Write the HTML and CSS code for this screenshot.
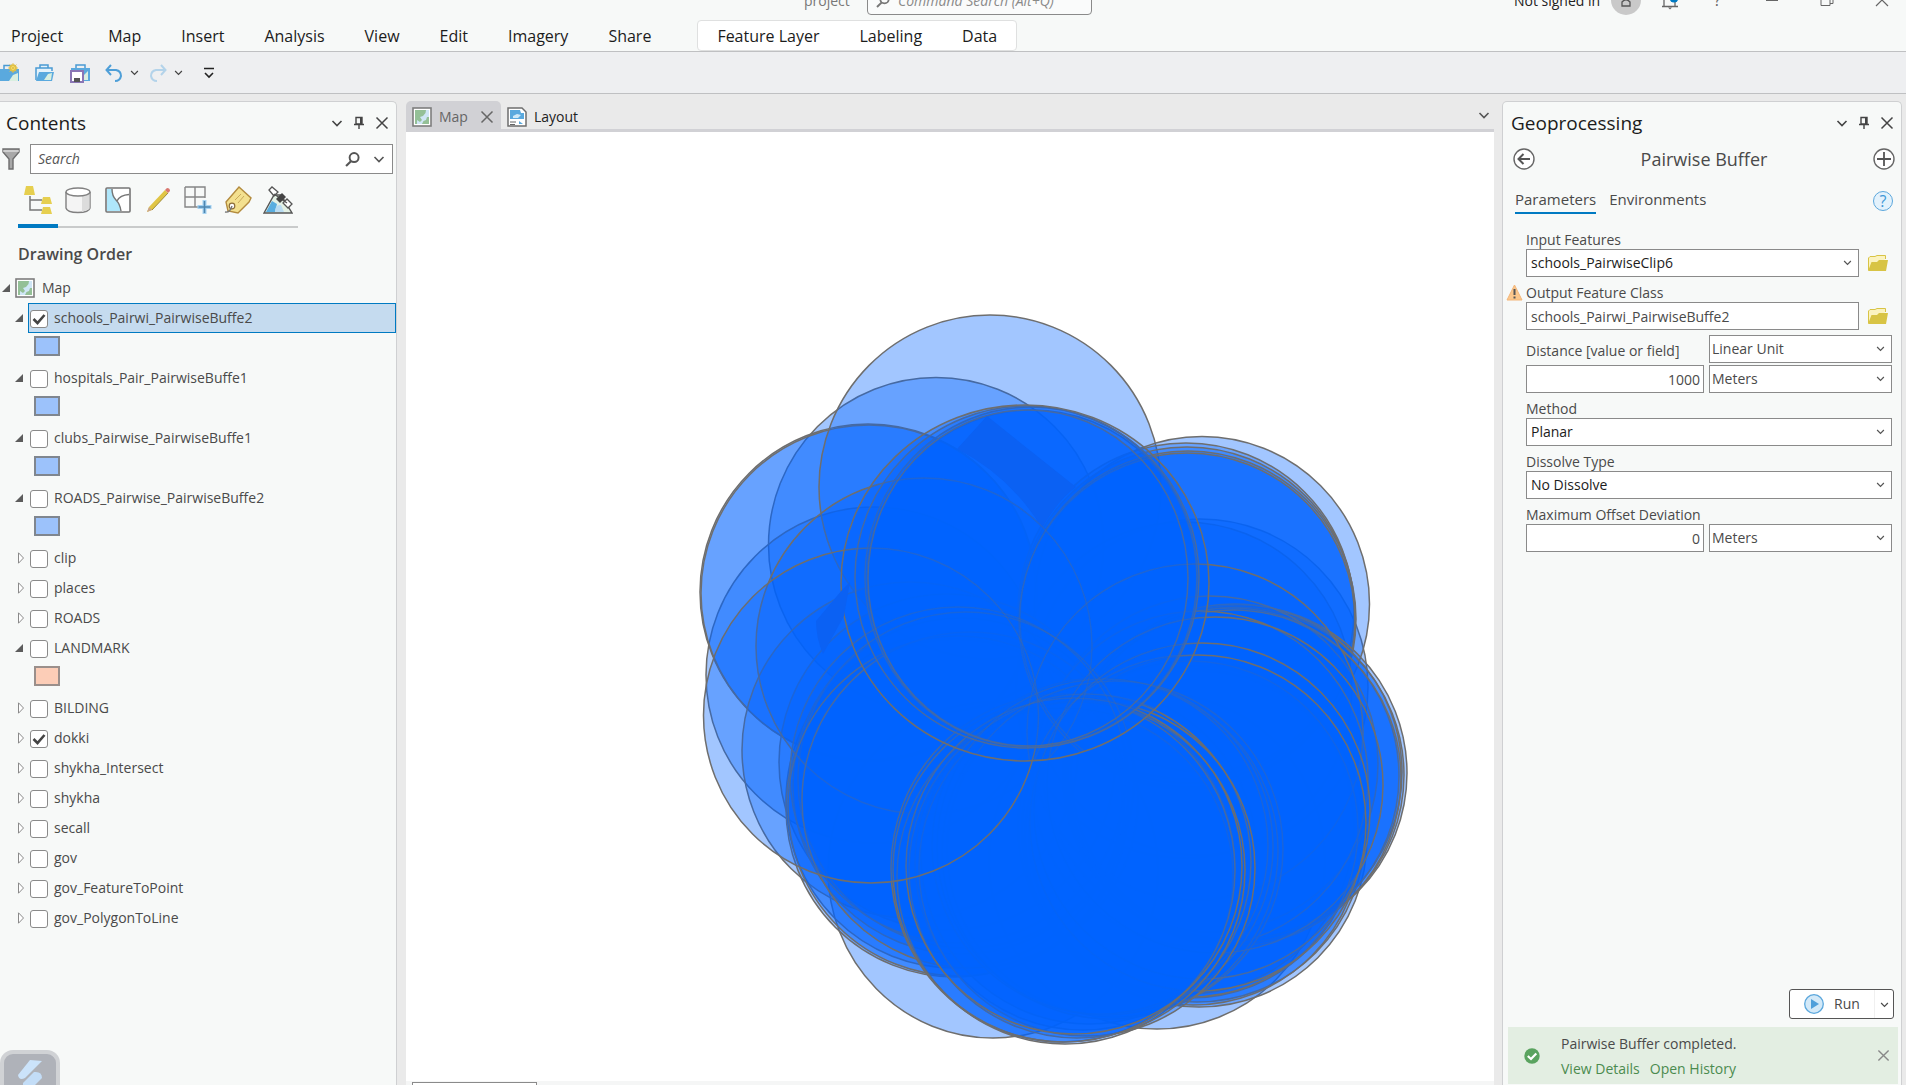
FILE: index.html
```html
<!DOCTYPE html>
<html lang="en">
<head>
<meta charset="utf-8">
<title>project</title>
<link rel="stylesheet" href="styles.css">
</head>
<body>
<svg class="defs" aria-hidden="true">
  <symbol id="chev" viewBox="0 0 12 12"><path d="M1.500 4L6 8.500L10.500 4" fill="none" stroke="currentColor" stroke-width="1.600"/></symbol>
  <symbol id="pin" viewBox="0 0 12 14"><path d="M3 1.500H9V8H3ZM1 8.500H11M6 8.500V13" fill="none" stroke="currentColor" stroke-width="1.400"/><path d="M7 1.500H9V8H7Z" fill="currentColor"/></symbol>
  <symbol id="x" viewBox="0 0 14 14"><path d="M1.500 1.500L12.500 12.500M12.500 1.500L1.500 12.500" fill="none" stroke="currentColor" stroke-width="1.500"/></symbol>
  <symbol id="mag" viewBox="0 0 14 14"><circle cx="8.500" cy="5.200" r="4.200" fill="none" stroke="currentColor" stroke-width="1.800"/><path d="M5.800 8.400L1 13" stroke="currentColor" stroke-width="2"/></symbol>
  <symbol id="mapicon" viewBox="0 0 20 20"><rect x="1" y="1" width="18" height="18" fill="#fff" stroke="#7d7d7d" stroke-width="1.600"/><path d="M3 3H17V17H3Z" fill="#cfe6f6"/><path d="M3 3H14L13.500 6L11 9L8 10L10 13L8 15L5 13L5 17H3ZM17 10V17H10L11.500 14L14 13L15 10Z" fill="#94c097"/></symbol>
  <symbol id="folder" viewBox="0 0 20 16"><path d="M.5 15V3L2 1.500H7L9 .5H17.500V4" fill="#fbf3c0" stroke="#d8c445"/><path d="M0 16L3.500 7H9L11 5H20L18 16Z" fill="#d8c445"/></symbol>
  <symbol id="open" viewBox="0 0 12 12"><path d="M10 2V10H2Z" fill="#5c5c5c"/></symbol>
  <symbol id="closed" viewBox="0 0 12 12"><path d="M5.500 .8V11.200L10.500 6Z" fill="#fff" stroke="#8a8a8a"/></symbol>
</svg>

<header class="top">
  <div class="titlebar">
    <span class="title-text">project</span>
    <label class="cmd"><svg width="14" height="14"><use href="#mag"/></svg><input type="text" placeholder="Command Search (Alt+Q)" aria-label="Command Search"></label>
    <div class="account">
      <span>Not signed in</span>
      <svg class="avatar" width="30" height="30" viewBox="0 0 30 30"><circle cx="15" cy="15" r="15" fill="#c9c9c9"/><path d="M11 21V17Q15 12.500 19 17V21Z" fill="none" stroke="#555" stroke-width="1.300"/></svg>
      <button class="win bell" aria-label="Notifications"><svg width="20" height="30" viewBox="0 0 20 30"><path d="M2 21.500H18M4 21V10Q10 5 15 10V21" fill="none" stroke="#666" stroke-width="1.300"/><path d="M8 22.500H12L10 24.500Z" fill="#666"/><circle cx="14" cy="13" r="4.500" fill="#007ac2"/></svg></button>
      <button class="win help-top" aria-label="Help">?</button>
      <button class="win" aria-label="Minimize"><svg width="14" height="30" viewBox="0 0 14 30"><path d="M1 15.500H13" stroke="#666"/></svg></button>
      <button class="win" aria-label="Restore"><svg width="14" height="30" viewBox="0 0 14 30"><path d="M1 10H10V20.500H1ZM10 18.500H13V8H4V10" fill="none" stroke="#666"/></svg></button>
      <button class="win" aria-label="Close"><svg width="14" height="30" viewBox="0 0 14 30"><path d="M1 9L13 21M13 9L1 21" stroke="#666" stroke-width="1.200"/></svg></button>
    </div>
  </div>
  <nav class="menu">
    <button class="file">Project</button><button>Map</button><button>Insert</button><button>Analysis</button><button>View</button><button>Edit</button><button>Imagery</button><button>Share</button>
    <div class="context"><button>Feature Layer</button><button>Labeling</button><button>Data</button></div>
  </nav>
</header>

<div class="quick">
  <button aria-label="New project"><svg width="20" height="20" viewBox="0 0 20 20"><path d="M4 6V2.500H11V6" fill="none" stroke="#4a9bd3" stroke-width="1.500"/><rect y="6" width="19" height="12" fill="#5aa9de"/><path d="M9 18L13 12L18 10V18Z" fill="#d9efe0"/><circle cx="13" cy="5" r="3" fill="#ffe97a" stroke="#dfbf45" stroke-width="1.500"/><path d="M13 0V10M8 5H18M9.500 1.500L16.500 8.500M16.500 1.500L9.500 8.500" stroke="#dfbf45" stroke-width=".8"/></svg></button>
  <button aria-label="Open project"><svg width="20" height="20" viewBox="0 0 20 20"><path d="M5 5V2H13V5M1 17V5H17V8" fill="#e4f2fb" stroke="#4a9bd3" stroke-width="1.500"/><path d="M1 18L4 9H19L17 18Z" fill="#5aa9de"/><path d="M9 17L13 11L17 10L16 17Z" fill="#d9efe0"/></svg></button>
  <button aria-label="Save project"><svg width="20" height="20" viewBox="0 0 20 20"><path d="M6 5V2H15V5" fill="none" stroke="#4a9bd3" stroke-width="1.500"/><path d="M1 5H20V18H1Z" fill="#5aa9de"/><path d="M14 17V12L18 8V17Z" fill="#d9efe0"/><path d="M1 8H13V19H1Z" fill="#fff" stroke="#8a76b5" stroke-width="2"/><path d="M4 15H10V19H4Z" fill="#555"/></svg></button>
  <button aria-label="Undo"><svg width="18" height="18" viewBox="0 0 18 18"><path d="M6 1L1.500 6L6 11M2 6H11Q16 7 16 12Q15 17 10 17" fill="none" stroke="#4f9fd8" stroke-width="2"/></svg></button>
  <button class="caret" aria-label="Undo list"><svg width="9" height="9"><use href="#chev"/></svg></button>
  <button aria-label="Redo"><svg width="18" height="18" viewBox="0 0 18 18"><path d="M12 1L16.500 6L12 11M16 6H7Q2 7 2 12Q3 17 8 17" fill="none" stroke="#b3d3ea" stroke-width="2"/></svg></button>
  <button class="caret" aria-label="Redo list"><svg width="9" height="9"><use href="#chev"/></svg></button>
  <button class="more" aria-label="Customize"><svg width="12" height="12" viewBox="0 0 12 12"><path d="M1 1.500H11M2 6L6 10L10 6" fill="none" stroke="#222" stroke-width="1.600"/></svg></button>
</div>

<main class="work">
  <section class="panel contents">
    <div class="phead"><h2>Contents</h2><div class="pbtn"><button aria-label="Options"><svg width="12" height="12"><use href="#chev"/></svg></button><button aria-label="Pin"><svg width="12" height="14"><use href="#pin"/></svg></button><button aria-label="Close"><svg width="14" height="14"><use href="#x"/></svg></button></div></div>
    <div class="search">
      <svg width="18" height="22" viewBox="0 0 18 22"><path d="M1 1H17V4L11 11V21H7V11L1 4Z" fill="#a8a8a8" stroke="#6d6d6d" stroke-width="1.400"/><path d="M1 3H17" stroke="#f5f5f5"/></svg>
      <div class="sbox"><input type="text" placeholder="Search" aria-label="Search"><svg width="15" height="15"><use href="#mag"/></svg><svg width="12" height="12"><use href="#chev"/></svg></div>
    </div>
    <div class="views">
      <button class="on" aria-label="List by drawing order"><svg width="28" height="28" viewBox="0 0 28 28"><path d="M6 10V24H18M6 14H18" fill="none" stroke="#777" stroke-width="1.500"/><path d="M2 0H9L11 9H0ZM19 11H26L28 18H17ZM19 21H26L28 28H17Z" fill="#e6cf4f"/></svg></button>
      <button aria-label="List by data source"><svg width="28" height="28" viewBox="0 0 28 28"><path d="M2 6V22Q3 26.500 14 26.500Q25 26.500 26 22V6" fill="#f4f4f4" stroke="#808080" stroke-width="1.400"/><path d="M18 10L25.500 7V23L18 26Z" fill="#dcdcdc"/><ellipse cx="14" cy="6" rx="12" ry="4" fill="#fff" stroke="#808080" stroke-width="1.400"/></svg></button>
      <button aria-label="List by selection"><svg width="28" height="28" viewBox="0 0 28 28"><rect x="2" y="2" width="24" height="24" rx="1" fill="#fff" stroke="#757575" stroke-width="1.600"/><path d="M3 3H8Q8 10 12 14Q16 18 17 25H3Z" fill="#afe7fb"/><path d="M8 3Q8 10 12 14Q16 18 17 25M13 15Q16 9 25 8.500" fill="none" stroke="#757575" stroke-width="1.400"/></svg></button>
      <button aria-label="List by editing"><svg width="28" height="28" viewBox="0 0 28 28"><path d="M3 26L5 21L21 4L24 7L8 24Z" fill="#e0c545"/><path d="M3 26L5 21L8 24Z" fill="#c9a58a"/><path d="M21 4L23 2Q26 2 26 5L24 7Z" fill="#d9776f"/><path d="M8 24L24 7" stroke="#a08c38"/></svg></button>
      <button aria-label="List by snapping"><svg width="28" height="28" viewBox="0 0 28 28"><path d="M1 1H21V12M1 1V21H14M11 1V21M1 11H21" fill="none" stroke="#858585" stroke-width="1.400"/><path d="M20.500 14V28M13.500 21H27.500" stroke="#a5d3f2" stroke-width="4"/><path d="M20.500 15V27M14.500 21H26.500" stroke="#4d86b0" stroke-width="1.600"/></svg></button>
      <button aria-label="List by labeling"><svg width="28" height="28" viewBox="0 0 28 28"><path d="M2 16L15 1L27 12L25 16L14 27L4 25Z" fill="#f3e08f" stroke="#b38b3e" stroke-width="1.400"/><circle cx="8" cy="20" r="2.800" fill="#fff" stroke="#8b6c3a" stroke-width="1.200"/><path d="M11 14L17 8M14 17L20 10" stroke="#c9a95a"/><path d="M8 20Q6 27 1 26" fill="none" stroke="#777" stroke-width="1.400"/></svg></button>
      <button aria-label="List by imagery"><svg width="30" height="28" viewBox="0 0 30 28"><path d="M1 27L11 9H18L29 27Z" fill="#e3f1e5" stroke="#555" stroke-width="1.400"/><path d="M3 26L9 15L14 18L12 26Z" fill="#59aee0"/><path d="M12 26Q12 18 18 19L21 26Z" fill="#b9dcf2"/><path d="M6 4L9 1L15 6L11 10ZM20 17L24 13L29 18L25 22ZM11 8L24 17" fill="#fff" stroke="#555" stroke-width="1.300"/><path d="M13 13L19 7L23 11L17 17Z" fill="#444"/></svg></button>
    </div>
    <h3>Drawing Order</h3>
    <ul class="tree">
      <li class="row root"><button class="tg" aria-label="Collapse"><svg width="12" height="12"><use href="#open"/></svg></button><svg width="20" height="20"><use href="#mapicon"/></svg><span>Map</span></li>
      <li class="row sel"><button class="tg" aria-label="Collapse"><svg width="12" height="12"><use href="#open"/></svg></button><label><input type="checkbox" checked>schools_Pairwi_PairwiseBuffe2</label></li>
      <li class="row sym"><i></i></li>
      <li class="row"><button class="tg" aria-label="Collapse"><svg width="12" height="12"><use href="#open"/></svg></button><label><input type="checkbox">hospitals_Pair_PairwiseBuffe1</label></li>
      <li class="row sym"><i></i></li>
      <li class="row"><button class="tg" aria-label="Collapse"><svg width="12" height="12"><use href="#open"/></svg></button><label><input type="checkbox">clubs_Pairwise_PairwiseBuffe1</label></li>
      <li class="row sym"><i></i></li>
      <li class="row"><button class="tg" aria-label="Collapse"><svg width="12" height="12"><use href="#open"/></svg></button><label><input type="checkbox">ROADS_Pairwise_PairwiseBuffe2</label></li>
      <li class="row sym"><i></i></li>
      <li class="row"><button class="tg" aria-label="Expand"><svg width="12" height="12"><use href="#closed"/></svg></button><label><input type="checkbox">clip</label></li>
      <li class="row"><button class="tg" aria-label="Expand"><svg width="12" height="12"><use href="#closed"/></svg></button><label><input type="checkbox">places</label></li>
      <li class="row"><button class="tg" aria-label="Expand"><svg width="12" height="12"><use href="#closed"/></svg></button><label><input type="checkbox">ROADS</label></li>
      <li class="row"><button class="tg" aria-label="Collapse"><svg width="12" height="12"><use href="#open"/></svg></button><label><input type="checkbox">LANDMARK</label></li>
      <li class="row sym peach"><i></i></li>
      <li class="row"><button class="tg" aria-label="Expand"><svg width="12" height="12"><use href="#closed"/></svg></button><label><input type="checkbox">BILDING</label></li>
      <li class="row"><button class="tg" aria-label="Expand"><svg width="12" height="12"><use href="#closed"/></svg></button><label><input type="checkbox" checked>dokki</label></li>
      <li class="row"><button class="tg" aria-label="Expand"><svg width="12" height="12"><use href="#closed"/></svg></button><label><input type="checkbox">shykha_Intersect</label></li>
      <li class="row"><button class="tg" aria-label="Expand"><svg width="12" height="12"><use href="#closed"/></svg></button><label><input type="checkbox">shykha</label></li>
      <li class="row"><button class="tg" aria-label="Expand"><svg width="12" height="12"><use href="#closed"/></svg></button><label><input type="checkbox">secall</label></li>
      <li class="row"><button class="tg" aria-label="Expand"><svg width="12" height="12"><use href="#closed"/></svg></button><label><input type="checkbox">gov</label></li>
      <li class="row"><button class="tg" aria-label="Expand"><svg width="12" height="12"><use href="#closed"/></svg></button><label><input type="checkbox">gov_FeatureToPoint</label></li>
      <li class="row"><button class="tg" aria-label="Expand"><svg width="12" height="12"><use href="#closed"/></svg></button><label><input type="checkbox">gov_PolygonToLine</label></li>
    </ul>
  </section>

  <section class="mappane">
    <div class="tabs">
      <div class="tab active"><svg width="20" height="20"><use href="#mapicon"/></svg><span>Map</span><button aria-label="Close Map"><svg width="14" height="14"><use href="#x"/></svg></button></div>
      <div class="tab"><svg width="20" height="20" viewBox="0 0 20 20"><path d="M1 1H15L19 5V19H1Z" fill="#fff" stroke="#6e6e6e" stroke-width="1.500"/><path d="M3 3H13L14 6H17V12H3Z" fill="#5aa9de"/><path d="M6 9L10 7L14 8L11 11H6Z" fill="#cfe9f7"/><path d="M3 15H9M3 17.500H8" stroke="#666"/><path d="M12 14L16 17H12Z" fill="#5aa9de"/></svg><span>Layout</span></div>
      <button class="tablist" aria-label="Views"><svg width="12" height="12"><use href="#chev"/></svg></button>
    </div>
    <svg class="map" viewBox="406 132 1088 949" role="img" aria-label="Map view">
      <clipPath id="ring"><ellipse cx="1025" cy="583" rx="184" ry="178"/></clipPath>
      <g class="buf">
        <circle cx="936" cy="545" r="167.500"/>
        <circle cx="874" cy="675" r="168"/>
        <circle cx="868" cy="592" r="168"/>
        <circle cx="869" cy="593" r="168"/>
        <ellipse cx="990" cy="487" rx="171" ry="172"/>
        <circle cx="1200" cy="687" r="168"/>
        <circle cx="1184" cy="690" r="168"/>
        <circle cx="1202" cy="604" r="167.500"/>
        <circle cx="1186" cy="611" r="168"/>
        <circle cx="1187" cy="615" r="168"/>
        <circle cx="1188" cy="619" r="168"/>
        <circle cx="1187" cy="621" r="168"/>
        <ellipse cx="993" cy="870" rx="165" ry="168"/>
        <circle cx="954" cy="800" r="168"/>
        <circle cx="947" cy="762" r="168"/>
        <circle cx="910" cy="750" r="168"/>
        <circle cx="1157" cy="861" r="168"/>
        <circle cx="1199" cy="839" r="168"/>
        <circle cx="1239" cy="773" r="168"/>
        <circle cx="955" cy="808" r="169"/>
        <circle cx="961" cy="786" r="168"/>
        <circle cx="966" cy="780" r="168"/>
        <circle cx="1197" cy="834" r="168"/>
        <circle cx="1190" cy="830" r="168"/>
        <circle cx="1186" cy="826" r="168"/>
        <circle cx="1193" cy="837" r="168"/>
        <circle cx="958" cy="775" r="168"/>
        <circle cx="1236" cy="775" r="168"/>
        <circle cx="1234" cy="772" r="168"/>
        <circle cx="1231" cy="776" r="168"/>
        <circle cx="1210" cy="764" r="168"/>
        <circle cx="1233" cy="778" r="168"/>
        <circle cx="924" cy="646" r="168"/>
        <circle cx="958" cy="806" r="170"/>
        <circle cx="970" cy="800" r="168"/>
        <circle cx="1089" cy="856" r="168"/>
        <circle cx="1195" cy="732" r="168"/>
        <circle cx="1190" cy="829" r="168"/>
        <circle cx="1200" cy="779" r="168"/>
        <circle cx="1115" cy="849" r="168"/>
        <circle cx="1110" cy="851" r="168"/>
        <circle cx="1105" cy="847" r="168"/>
        <circle cx="1100" cy="846" r="168"/>
        <circle cx="1215" cy="785" r="168"/>
        <circle cx="1202" cy="811" r="168"/>
        <circle cx="1198" cy="823" r="168"/>
        <circle cx="1083" cy="862" r="168"/>
        <ellipse cx="1063" cy="868" rx="172" ry="174"/>
        <circle cx="1065" cy="876" r="168"/>
        <circle cx="1087" cy="868" r="168"/>
        <circle cx="1077" cy="870" r="168"/>
        <ellipse cx="1064" cy="870" rx="171" ry="172"/>
        <circle cx="1074" cy="866" r="168"/>
        <circle cx="871" cy="715.500" r="167.500"/>
        <ellipse cx="1032" cy="578" rx="165" ry="168"/>
        <ellipse cx="1031" cy="577" rx="166" ry="170"/>
        <ellipse cx="1027" cy="577" rx="172" ry="171"/>
        <ellipse cx="1028" cy="578" rx="160" ry="168"/>
        <ellipse cx="1025" cy="583" rx="184" ry="178"/>
      </g>
      <g fill="#0b61f3">
        <path d="M987 416L1076 487Q1058 500 1042 528Q1010 476 957 449Z"/>
        <path d="M816 621L842 590L850 582L844 616L823 654Q816 638 816 621Z"/>
      </g>
      <g class="faint" clip-path="url(#ring)">
        <circle cx="1188" cy="619" r="168"/>
        <circle cx="1187" cy="622" r="168"/>
        <circle cx="924" cy="646" r="168"/>
        <circle cx="871" cy="715.500" r="167.500"/>
        <circle cx="958" cy="775" r="168"/>
        <circle cx="966" cy="780" r="168"/>
        <circle cx="1195" cy="732" r="168"/>
        <circle cx="1202" cy="811" r="168"/>
        <circle cx="1190" cy="823" r="168"/>
        <circle cx="1215" cy="785" r="168"/>
        <circle cx="1115" cy="849" r="168"/>
        <circle cx="1105" cy="847" r="168"/>
        <circle cx="1087" cy="862" r="168"/>
        <circle cx="1074" cy="866" r="168"/>
      </g>
    </svg>
    <div class="status"><div class="scale"></div></div>
  </section>

  <section class="panel geo">
    <div class="phead"><h2>Geoprocessing</h2><div class="pbtn"><button aria-label="Options"><svg width="12" height="12"><use href="#chev"/></svg></button><button aria-label="Pin"><svg width="12" height="14"><use href="#pin"/></svg></button><button aria-label="Close"><svg width="14" height="14"><use href="#x"/></svg></button></div></div>
    <div class="toolhead">
      <button aria-label="Back"><svg width="22" height="22" viewBox="0 0 22 22"><circle cx="11" cy="11" r="10" fill="#fff" stroke="#666" stroke-width="1.400"/><path d="M17 11H6M10.500 6L5.500 11L10.500 16" fill="none" stroke="#555" stroke-width="2"/></svg></button>
      <h2>Pairwise Buffer</h2>
      <button aria-label="Add"><svg width="22" height="22" viewBox="0 0 22 22"><circle cx="11" cy="11" r="10" fill="#fff" stroke="#666" stroke-width="1.400"/><path d="M11 4V18M4 11H18" stroke="#555" stroke-width="1.800"/></svg></button>
    </div>
    <div class="ptabs"><button class="on">Parameters</button><button>Environments</button><button class="help" aria-label="Help">?</button></div>
    <form class="params">
      <label for="inf">Input Features</label>
      <div class="line"><div class="sel-wrap dark"><select id="inf"><option>schools_PairwiseClip6</option></select><svg width="9" height="9"><use href="#chev"/></svg></div><button type="button" aria-label="Browse"><svg width="20" height="16"><use href="#folder"/></svg></button></div>
      <label for="out" class="warned"><svg width="17" height="17" viewBox="0 0 17 17"><path d="M8.500 1L16 16H1Z" fill="#fbc78c" stroke="#f3b679"/><path d="M8.500 5V11M8.500 12.500V14.500" stroke="#555" stroke-width="2"/></svg>Output Feature Class</label>
      <div class="line"><input id="out" type="text" value="schools_Pairwi_PairwiseBuffe2"><button type="button" aria-label="Browse"><svg width="20" height="16"><use href="#folder"/></svg></button></div>
      <div class="pair first"><label for="dist">Distance [value or field]</label><div class="sel-wrap tight"><select aria-label="Distance type"><option>Linear Unit</option></select><svg width="9" height="9"><use href="#chev"/></svg></div></div>
      <div class="pair"><input id="dist" class="num" type="text" value="1000"><div class="sel-wrap tight"><select aria-label="Distance unit"><option>Meters</option></select><svg width="9" height="9"><use href="#chev"/></svg></div></div>
      <label for="method">Method</label>
      <div class="sel-wrap dark"><select id="method"><option>Planar</option></select><svg width="9" height="9"><use href="#chev"/></svg></div>
      <label for="diss">Dissolve Type</label>
      <div class="sel-wrap dark"><select id="diss"><option>No Dissolve</option></select><svg width="9" height="9"><use href="#chev"/></svg></div>
      <label for="max">Maximum Offset Deviation</label>
      <div class="pair"><input id="max" class="num" type="text" value="0"><div class="sel-wrap tight"><select aria-label="Offset unit"><option>Meters</option></select><svg width="9" height="9"><use href="#chev"/></svg></div></div>
    </form>
    <div class="run"><button class="go"><svg width="20" height="20" viewBox="0 0 20 20"><circle cx="10" cy="10" r="9.300" fill="#d3e9f8" stroke="#5ba7dc" stroke-width="1.300"/><path d="M7 5L15 10L7 15Z" fill="#4f9fda"/></svg>Run</button><button class="drop" aria-label="Run options"><svg width="9" height="9"><use href="#chev"/></svg></button></div>
    <div class="done">
      <svg width="16" height="16" viewBox="0 0 16 16"><circle cx="8" cy="8" r="7.700" fill="#5aa35f"/><path d="M3.800 8L7 11L12.300 5.500" fill="none" stroke="#fff" stroke-width="2.200"/></svg>
      <div class="msg"><p>Pairwise Buffer completed.</p><p><a href="#">View Details</a><a href="#">Open History</a></p></div>
      <button aria-label="Dismiss"><svg width="13" height="13"><use href="#x"/></svg></button>
    </div>
  </section>
</main>
<div class="recorder"><svg width="26" height="27" viewBox="0 0 26 27"><path d="M1 17L13 2L25 3L8 20Q2 23 1 17Z" fill="#cbe3fa"/><path d="M6 25L17 14Q25 13 25 20L18 27H6Z" fill="#c3ddf7"/></svg></div>
</body>
</html>
```
FILE: styles.css
```css
* { box-sizing: border-box; }
body {
  margin: 0;
  height: 100vh;
  display: flex;
  flex-direction: column;
  overflow: hidden;
  background: #eaeaea;
  color: #4a4a4a;
  font: 14px/18px "Open Sans", "Noto Sans", sans-serif;
}
button, input, select { font: inherit; color: inherit; }
button { margin: 0; padding: 0; border: 0; background: none; display: inline-flex; align-items: center; justify-content: center; }
svg { display: block; flex: none; }
h2, h3, p, ul { margin: 0; padding: 0; font-weight: 400; list-style: none; }
.defs { position: absolute; width: 0; height: 0; }

.top { background: #f7f9f8; border-bottom: 1px solid #bfc0c2; height: 52px; overflow: hidden; }
.titlebar { height: 15px; display: flex; align-items: flex-end; padding-left: 804px; line-height: 32px; color: #777; }
.title-text { width: 63px; height: 30px; }
.cmd { flex: none; width: 225px; height: 30px; border: 1px solid #8a8a8a; border-radius: 4px; background: #fafbfb; display: flex; align-items: center; padding: 2px 8px 0; gap: 8px; }
.cmd input { border: 0; background: none; padding: 0; width: 180px; font-style: italic; outline: 0; }
.cmd input::placeholder { color: #8a8a8a; }
.account { margin-left: auto; height: 30px; display: flex; align-items: center; color: #222; padding-right: 17px; }
.account span { height: 30px; }
.avatar { margin: 0 19px 0 11px; }
.win { height: 30px; color: #666; margin-right: 41px; font-size: 16px; }
.bell { margin-right: 34px; }
.help-top { margin-right: 44px; }
.win:last-child { margin-right: 0; }
.menu { display: flex; height: 36px; align-items: flex-end; padding-left: 11px; }
.menu button { height: 30px; color: #1c1c1c; font-size: 16px; margin-right: 40px; }
.menu .file { margin-right: 45px; }
.context { display: flex; height: 31px; border: 1px solid #dfe0e0; border-radius: 4px; background: #fff; padding-left: 19px; margin-left: 6px; }
.context button:last-child { margin-right: 19px; }

.quick { height: 42px; background: #eeeff1; border-bottom: 1px solid #bfc0c2; display: flex; align-items: center; gap: 15px; flex: none; }
.quick .caret { margin-left: -8px; color: #444; }
.quick .caret + button { margin-left: -5px; }
.quick .caret + .more { margin-left: 5px; }

.work { flex: 1; min-height: 0; display: grid; grid-template-columns: 397px 1fr 400px; gap: 8px; padding: 7px 4px 0 0; }
.panel { background: #f7f9f8; border: 1px solid #cfd0d2; border-bottom: 0; border-radius: 5px 5px 0 0; display: flex; flex-direction: column; min-width: 0; min-height: 0; }
.contents { border-left: 0; border-radius: 0 5px 0 0; }
.phead { height: 42px; display: flex; align-items: center; justify-content: space-between; padding: 0 7px 0 6px; color: #1c1c1c; }
.phead h2 { font-size: 19px; line-height: 24px; }
.pbtn { display: flex; align-items: center; gap: 10px; color: #444; }

.search { display: flex; align-items: center; gap: 10px; padding: 0 3px 0 2px; }
.sbox { flex: 1; min-width: 0; height: 30px; border: 1px solid #8a8a8a; background: #fff; display: flex; align-items: center; padding: 0 7px; gap: 13px; color: #555; }
.sbox input { flex: 1; min-width: 0; border: 0; padding: 0; outline: 0; font-style: italic; }
.sbox input::placeholder { color: #555; opacity: 1; }
.views { display: flex; width: 280px; margin: 10px 0 0 18px; height: 44px; border-bottom: 2px solid #c9cbcb; }
.views button { width: 40px; height: 44px; padding-bottom: 13px; }
.views .on { border-bottom: 4px solid #007ac2; padding-bottom: 9px; }
.contents h3 { font-size: 16px; line-height: 22px; font-weight: 600; margin: 15px 0 8px 18px; }
.row { height: 30px; display: flex; align-items: center; padding-left: 13px; }
.tg { width: 12px; height: 12px; margin-right: 3px; }
.row label { flex: 1; height: 30px; display: flex; align-items: center; padding-left: 1px; gap: 6px; border: 1px solid transparent; }
.sel label { background: #c5dbef; border-color: #007ac2; }
.row input { appearance: none; width: 18px; height: 18px; margin: 2px 0 0; border: 1px solid #8a8a8a; border-radius: 3px; background: #fff center / 14px 14px no-repeat; flex: none; }
.row input:checked { background-image: url("data:image/svg+xml,%3Csvg xmlns='http://www.w3.org/2000/svg' viewBox='0 0 14 14'%3E%3Cpath d='M1.500 7L5.500 11L12.500 3' fill='none' stroke='%23444' stroke-width='2.600'/%3E%3C/svg%3E"); }
.root { padding-left: 0; }
.root span { margin-left: 7px; }
.sym { padding: 0 0 4px 34px; }
.sym i { width: 26px; height: 20px; border: 2px solid #7f868f; background: #9cc2fb; }
.peach i { background: #fccdb7; border-color: #9a8f8b; }

.mappane { display: flex; flex-direction: column; min-width: 0; min-height: 0; margin-left: 1px; }
.tabs { flex: none; height: 31px; display: flex; border-bottom: 3px solid #d1d1d5; }
.tab { display: flex; align-items: center; padding: 3px 7px 0 6px; gap: 7px; color: #222; }
.tab.active { background: #d1d1d5; border-radius: 5px 5px 0 0; color: #666; }
.tab.active button { margin-left: 5px; }
.tablist { margin-left: auto; padding-right: 4px; color: #555; }
.map { flex: 1; min-height: 0; width: 100%; background: #fff; }
.buf { fill: #0064ff; fill-opacity: .365; stroke: #6e6e6e; stroke-width: 1.500; }
.faint { fill: none; stroke: #6e6e6e; stroke-opacity: .2; stroke-width: 1.500; }
.status { flex: none; height: 4px; background: #f5f6f6; padding: 1px 0 0 6px; overflow: hidden; }
.scale { width: 125px; height: 20px; border: 1px solid #8a8a8a; background: #fff; }

.geo .phead { padding: 0 7px 0 8px; }
.toolhead { display: flex; justify-content: space-between; align-items: center; height: 30px; padding: 0 6px 0 10px; }
.toolhead h2 { font-size: 18px; line-height: 24px; }
.ptabs { display: flex; gap: 13px; height: 42px; margin-top: 9px; padding: 0 8px 0 12px; align-items: flex-start; }
.ptabs button { height: 31px; padding-top: 2px; border-bottom: 2px solid transparent; font-size: 15px; }
.ptabs .on { border-color: #007ac2; font-weight: 500; }
.ptabs .help { margin: 8px 0 0 auto; padding: 0; width: 20px; height: 20px; border: 1px solid #5ba7dc; border-radius: 50%; background: #e3f2fc; color: #3e97d6; font-size: 16px; }
.params { display: flex; flex-direction: column; padding: 6px 9px 0 23px; }
.params label { height: 18px; margin-top: 7px; white-space: nowrap; }
.params > label:first-child { margin-top: 0; }
.params input, .params select { width: 100%; height: 28px; border: 1px solid #8a8a8a; border-radius: 0; background: #fff; padding: 0 4px; appearance: none; outline: 0; }
.line { display: flex; align-items: center; gap: 9px; padding-right: 4px; }
.sel-wrap { position: relative; flex: 1; min-width: 0; }
.sel-wrap svg { position: absolute; right: 7px; top: 9px; color: #555; }
.dark { color: #1c1c1c; }
.tight select { padding: 0 2px; }
.warned { position: relative; }
.warned svg { position: absolute; left: -20px; top: 0; }
.pair { display: grid; grid-template-columns: 178px 1fr; gap: 5px; }
.pair.first { margin: 5px 0 2px; }
.params .num { text-align: right; padding: 0 3px; }
.run { margin: auto 7px 8px auto; display: flex; width: 105px; height: 30px; border: 1px solid #555; border-radius: 3px; background: #fff; flex: none; }
.go { flex: 1; gap: 10px; }
.drop { width: 19px; border-left: 1px solid #f0f0f0; }
.done { flex: none; margin: 0 3px 1px 5px; height: 57px; background: #e3eee2; display: flex; align-items: center; padding: 0 8px 0 16px; gap: 21px; }
.msg { flex: 1; line-height: 25px; }
.done a { color: #4b8b4f; text-decoration: none; margin-right: 10px; }
.done button { color: #888; }

.recorder { position: fixed; left: 0; bottom: 0; width: 60px; height: 35px; border: 4px solid #d0d2d5; border-bottom: 0; border-radius: 13px 13px 0 0; background: #afb2b9; display: flex; justify-content: center; align-items: flex-end; }
```
